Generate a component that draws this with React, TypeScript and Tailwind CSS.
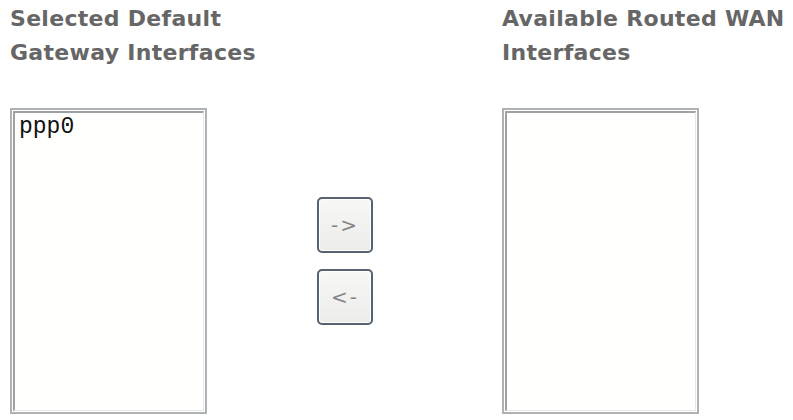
import React from "react";

function ListBox({ items }: { items: string[] }) {
  return (
    <div className="w-[197px] h-[306px] border-2 border-[#aeb2b4] p-[1px] bg-white">
      <div className="h-full border-t-2 border-l-2 border-r border-b border-t-[#9da1a4] border-l-[#9da1a4] border-r-[#e6e8e8] border-b-[#e6e8e8] bg-[#fffffd] pl-[4px] pt-[1px]">
        {items.map((it) => (
          <div
            key={it}
            className="text-[23px] leading-[26px] text-[#111]"
            style={{ fontFamily: '"Liberation Mono", "DejaVu Sans Mono", monospace' }}
          >
            {it}
          </div>
        ))}
      </div>
    </div>
  );
}

function ArrowButton({ label }: { label: string }) {
  return (
    <button
      className="w-[56px] h-[56px] rounded-[5px] border-2 border-[#556270] bg-gradient-to-b from-[#f7f7f5] to-[#ececea] shadow-[inset_0_0_0_1px_#ffffff] text-[#858585] text-[20px] tracking-[2px] flex items-center justify-center"
      style={{ fontFamily: '"DejaVu Sans", Verdana, sans-serif' }}
    >
      {label}
    </button>
  );
}

export default function App() {
  const heading = "text-[22px] leading-[34px] font-bold text-[#666666] whitespace-nowrap tracking-[0.3px]";
  const font = { fontFamily: '"DejaVu Sans", Verdana, Tahoma, sans-serif' };
  return (
    <div className="w-[793px] h-[420px] bg-white overflow-hidden">
      <div className="flex pt-[2px]" style={font}>
        <div className={`w-[492px] pl-[10px] ${heading}`}>
          Selected Default
          <br />
          Gateway Interfaces
        </div>
        <div className={`pl-[10px] ${heading}`}>
          Available Routed WAN
          <br />
          Interfaces
        </div>
      </div>
      <div className="flex items-start pl-[10px] mt-[38px]">
        <ListBox items={["ppp0"]} />
        <div className="flex flex-col gap-[16px] ml-[110px] mt-[89px]">
          <ArrowButton label="->" />
          <ArrowButton label="<-" />
        </div>
        <div className="ml-[129px]">
          <ListBox items={[]} />
        </div>
      </div>
    </div>
  );
}
